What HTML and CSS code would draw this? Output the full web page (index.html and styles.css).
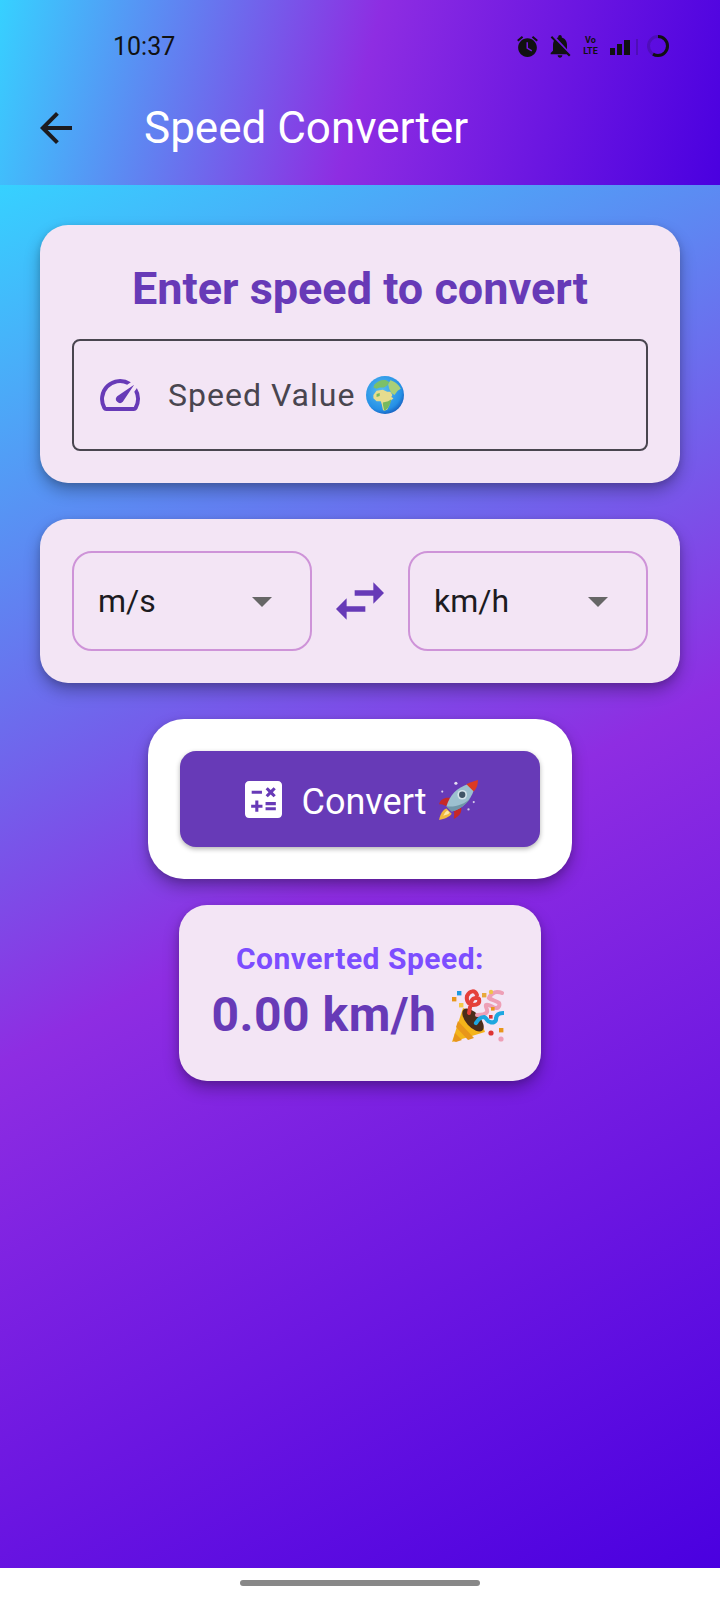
FILE: index.html
```html
<!DOCTYPE html>
<html lang="en">
<head>
    <meta charset="UTF-8">
    <meta name="viewport" content="width=device-width, initial-scale=1.0">
    <title>Speed Converter</title>
    <link rel="stylesheet" href="styles.css">
</head>
<body>
    <div class="app">
        <header class="appbar">
            <div class="statusbar">
                <span class="clock">10:37</span>
                <div class="status-icons">
                    <svg class="st-alarm" viewBox="0 0 24 24"><path d="M22 5.72l-4.6-3.86-1.29 1.53 4.6 3.86L22 5.72zM7.88 3.39L6.6 1.86 2 5.71l1.29 1.53 4.59-3.85z"/><path fill-rule="evenodd" d="M12 4c-4.97 0-9 4.03-9 9s4.02 9 9 9c4.97 0 9-4.03 9-9s-4.03-9-9-9zm.5 4H11v6l4.75 2.85.75-1.23-4-2.37V8z"/></svg>
                    <svg class="st-bell" viewBox="0 0 24 24"><path d="M20 18.69L7.84 6.14 5.27 3.49 4 4.76l2.8 2.8v.01c-.52.99-.8 2.16-.8 3.42v5l-2 2v1h13.73l2 2L21 19.72l-1-1.03zM12 22c1.11 0 2-.89 2-2h-4c0 1.11.89 2 2 2zm6-7.32V11c0-3.08-1.64-5.64-4.5-6.32V4c0-.83-.67-1.5-1.5-1.5s-1.5.67-1.5 1.5v.68c-.15.03-.29.08-.42.12-.1.03-.2.07-.3.11h-.01c-.2.08-.4.17-.59.27-.01 0-.01 0-.02.01L18 14.68z"/></svg>
                    <span class="st-volte">Vo<br>LTE</span>
                    <svg class="st-signal" viewBox="0 0 28 22"><rect x="0" y="13" width="5" height="7"/><rect x="7" y="9" width="5" height="11"/><rect x="14" y="5" width="6" height="15"/><rect x="26" y="4" width="2" height="16" opacity=".2"/></svg>
                    <svg class="st-ring" viewBox="0 0 24 24"><circle cx="12" cy="12" r="9.5" fill="none" stroke="#111" stroke-opacity=".18" stroke-width="3"/><path d="M12 2.5a9.5 9.5 0 0 1 0 19 9.5 9.5 0 0 1-5-1.4" fill="none" stroke="#111" stroke-width="3"/></svg>
                </div>
            </div>
            <div class="toolbar">
                <svg class="back-icon" viewBox="0 0 24 24"><path d="M20 11H7.83l5.59-5.59L12 4l-8 8 8 8 1.41-1.41L7.83 13H20v-2z"/></svg>
                <h1 class="title">Speed Converter</h1>
            </div>
        </header>

        <main class="content">
            <section class="card input-card">
                <h2 class="card-heading">Enter speed to convert</h2>
                <div class="field">
                    <svg class="field-icon" viewBox="0 0 24 24"><path d="M20.38 8.57l-1.23 1.85a8 8 0 0 1-.22 7.58H5.07A8 8 0 0 1 15.58 6.85l1.85-1.23A10 10 0 0 0 3.35 19a2 2 0 0 0 1.72 1h13.85a2 2 0 0 0 1.74-1 10 10 0 0 0-.27-10.44zm-9.79 6.84a2 2 0 0 0 2.83 0l5.66-8.49-8.49 5.66a2 2 0 0 0 0 2.83z"/></svg>
                    <span class="field-label">Speed Value</span>
                    <svg class="emoji globe" viewBox="0 0 36 36">
                        <defs><radialGradient id="sea" cx=".42" cy=".38" r=".68"><stop offset="0" stop-color="#58bdf0"/><stop offset=".75" stop-color="#2590e6"/><stop offset="1" stop-color="#1456b8"/></radialGradient></defs>
                        <circle cx="18" cy="18" r="18" fill="url(#sea)"/>
                        <path d="M8 8c3-3 7-5 11-4l3 2-2 3-3 2-4 0-3 1-3-1z" fill="#7cc068"/>
                        <path d="M23 4c4 1 8 4 10 8l-3 2-3 4-3-2-2-4-1-4z" fill="#a9cf78"/>
                        <path d="M7 18l3-4 6-1 4 2 3 0 2 3-1 2 2 1-3 3-1 4-2 4-3 1-1-1-1-5-1-3-4 0-3-3z" fill="#e6dc8e"/>
                        <path d="M16 25l5-1 3-2-1 4-2 4-3 3-1-1-1-5zM10 17l3-1 0 3-3 1z" fill="#76b95e"/>
                    </svg>
                </div>
            </section>

            <section class="card units-card">
                <div class="dropdown">
                    <span class="unit">m/s</span>
                    <svg class="caret" viewBox="0 0 24 24"><path d="M7 10l5 5 5-5z"/></svg>
                </div>
                <svg class="swap-icon" viewBox="0 0 24 24"><path d="M6.99 11L3 15l3.99 4v-3H14v-2H6.99v-3zM21 9l-4-4v3h-7v2h7v3l4-4z"/></svg>
                <div class="dropdown">
                    <span class="unit">km/h</span>
                    <svg class="caret" viewBox="0 0 24 24"><path d="M7 10l5 5 5-5z"/></svg>
                </div>
            </section>

            <section class="convert-box">
                <button class="convert-btn">
                    <svg class="calc-icon" viewBox="3 3 18 18"><path d="M19 3H5c-1.1 0-2 .9-2 2v14c0 1.1.9 2 2 2h14c1.1 0 2-.9 2-2V5c0-1.1-.9-2-2-2zm-5.97 4.06L14.09 6l1.41 1.41L16.91 6l1.06 1.06-1.41 1.41 1.41 1.41-1.06 1.06-1.41-1.4-1.41 1.41-1.06-1.06 1.41-1.41-1.41-1.42zm-6.78.66h5v1.5h-5v-1.5zM11.5 16h-2v2H8v-2H6v-1.5h2v-2h1.5v2h2V16zm6.5 1.25h-5v-1.5h5v1.5zm0-2.5h-5v-1.5h5v1.5z"/></svg>
                    <span class="btn-text">Convert</span>
                    <svg class="emoji rocket" viewBox="0 0 40 40">
                        <path d="M2 39c1-6 4-10 7-11l5 5c-2 3-7 5-12 6z" fill="#f0b83e"/>
                        <path d="M6 35c1-2 2-4 4-5l2 2c-1 2-3 2-6 3z" fill="#fbe7a8"/>
                        <path d="M2 24c1-5 6-7 11-6l-4 8c-3-2-5-2-7-2z" fill="#c62828"/>
                        <path d="M16 38c0-3 1-5 0-7l7-4c1 5-2 9-7 11z" fill="#c62828"/>
                        <path d="M9 26c3-11 11-18 20-21l6 6c-3 9-10 17-21 20z" fill="#9cc0cf"/>
                        <path d="M9 26l5 5c8-2 14-7 18-13-6 6-14 9-23 8z" fill="#6f95a8"/>
                        <path d="M28 5c4-2 8-3 11-4 0 4-1 8-4 11z" fill="#dc3a22"/>
                        <circle cx="24" cy="15" r="4.6" fill="#d3e3ea"/><circle cx="24" cy="15" r="3" fill="#3f5566"/>
                        <circle cx="18" cy="4" r="1.5" fill="#e6dff2"/><circle cx="5" cy="12" r="1" fill="#d6cdea"/><circle cx="35" cy="22" r="1" fill="#d6cdea"/><circle cx="30" cy="29" r="1.1" fill="#d6cdea"/>
                    </svg>
                </button>
            </section>

            <section class="card result-card">
                <div class="result-label">Converted Speed:</div>
                <div class="result-value">
                    <span>0.00 km/h</span>
                    <svg class="emoji popper" viewBox="0 0 52 54">
                        <path d="M0 54L11 20c8 2 19 13 22 24z" fill="#f4b41a"/>
                        <path d="M3 45l7 7-6 2-3-1zM6 33l16 17-6 2L4 39z" fill="#e8961a"/>
                        <ellipse cx="21" cy="32" rx="7" ry="14" transform="rotate(-42 21 32)" fill="#4a2c1a"/>
                        <path d="M25 7C23 2 18 2 15 8c-1 5 2 9 6 9 5 0 7-2 6-6-1-2-6-1-7 1-2 4-2 9-3 13" fill="none" stroke="#e5403a" stroke-width="4" stroke-linecap="round"/>
                        <path d="M25 27c4 0 9-1 10-3 1-3-2-5-1-7 2-2 7 3 10 3 3 0 4-3 3-5-2-2-8-3-10-5 1-3 5-6 8-6 3 0 5 1 5 1" fill="none" stroke="#ee9fb6" stroke-width="4" stroke-linecap="round"/>
                        <path d="M24 35c3-5 6-6 8-6 3 1 3 5 6 5 3 1 6 0 6-3 0-4 3-6 7-6" fill="none" stroke="#1da7e0" stroke-width="4.2" stroke-linecap="round"/>
                        <rect x="5" y="3" width="4.4" height="4.4" fill="#1d9be0"/><rect x="0" y="9" width="4.4" height="4.4" fill="#e8961a"/><rect x="7" y="15" width="4.4" height="4.4" fill="#f6c945"/><rect x="30" y="5" width="4.4" height="4.4" fill="#e8a93a"/><circle cx="39" cy="4" r="2.2" fill="#f0c24a"/>
                        <rect x="39" y="19" width="3.6" height="3.6" fill="#e8961a"/><rect x="37" y="27" width="3.6" height="3.6" fill="#d33"/><circle cx="39" cy="45" r="2.6" fill="#d33"/><rect x="47" y="40" width="4.4" height="4.4" fill="#e8961a"/><circle cx="49" cy="51" r="2.6" fill="#ee9fb6"/>
                    </svg>
                </div>
            </section>
        </main>

        <footer class="navbar"><div class="nav-pill"></div></footer>
    </div>
</body>
</html>
```

FILE: styles.css
```css
:root {
    --primary: #673ab7;
    --card-bg: #f3e5f5;
    --shadow: 0 8px 16px rgba(0, 0, 0, 0.28), 0 2px 6px rgba(0, 0, 0, 0.12);
}

* {
    margin: 0;
    padding: 0;
    box-sizing: border-box;
}

body {
    font-family: 'Roboto', sans-serif;
    background-color: #fff;
    overflow: hidden;
}

.app {
    display: flex;
    flex-direction: column;
    width: 720px;
    height: 1600px;
}

.appbar {
    height: 185px;
    flex: none;
    background: linear-gradient(104.4deg, #36d1ff 0%, #8e2de2 50%, #4a00e0 100%);
}

.statusbar {
    height: 92px;
    display: flex;
    align-items: center;
    justify-content: space-between;
    padding: 0 50px 0 113px;
    color: #111;
}

.clock {
    font-size: 25px;
}

.status-icons {
    display: flex;
    align-items: center;
}

.status-icons svg {
    display: block;
    fill: #111;
}

.st-alarm { width: 25px; height: 25px; }
.st-bell { width: 28px; height: 28px; margin-left: 6px; }

.st-volte {
    width: 15px;
    margin-left: 9px;
    font-size: 9px;
    line-height: 11px;
    font-weight: 700;
    text-align: center;
    white-space: nowrap;
}

.st-signal { width: 28px; height: 22px; margin-left: 12px; }
.st-ring { width: 24px; height: 24px; margin-left: 8px; }

.toolbar {
    display: flex;
    align-items: center;
    height: 72px;
    padding-left: 32px;
}

.back-icon {
    width: 48px;
    height: 48px;
    fill: #1c1b1f;
    flex: none;
}

.title {
    margin-left: 64px;
    font-size: 44px;
    font-weight: 400;
    color: #fff;
}

.content {
    flex: 1;
    display: flex;
    flex-direction: column;
    align-items: center;
    padding: 40px 40px 0;
    background: linear-gradient(152.5deg, #36d1ff 0%, #8e2de2 50%, #4a00e0 100%);
}

.card {
    background-color: var(--card-bg);
    border-radius: 28px;
    box-shadow: var(--shadow);
}

.input-card {
    width: 640px;
    height: 258px;
    padding: 38px 32px 0;
}

.card-heading {
    font-size: 45px;
    line-height: 52px;
    font-weight: 700;
    text-align: center;
    color: var(--primary);
}

.field {
    display: flex;
    align-items: center;
    height: 112px;
    margin-top: 24px;
    padding-left: 22px;
    border: 2px solid #49454f;
    border-radius: 8px;
}

.field-icon {
    width: 48px;
    height: 48px;
    fill: var(--primary);
    flex: none;
}

.field-label {
    margin-left: 24px;
    font-size: 32px;
    letter-spacing: 1px;
    color: #49454f;
}

.emoji {
    display: block;
    flex: none;
}

.globe {
    width: 38px;
    height: 38px;
    margin-left: 11px;
}

.units-card {
    display: flex;
    align-items: center;
    justify-content: space-between;
    width: 640px;
    height: 164px;
    margin-top: 36px;
    padding: 0 32px;
}

.dropdown {
    display: flex;
    align-items: center;
    justify-content: space-between;
    width: 240px;
    height: 100px;
    padding: 0 24px;
    border: 2px solid #ce93d8;
    border-radius: 20px;
}

.unit {
    font-size: 32px;
    font-weight: 450;
    color: #1c1b1f;
}

.caret {
    width: 48px;
    height: 48px;
    fill: #666;
}

.swap-icon {
    width: 64px;
    height: 64px;
    fill: var(--primary);
}

.convert-box {
    display: flex;
    align-items: center;
    justify-content: center;
    width: 424px;
    height: 160px;
    margin-top: 36px;
    background-color: #fff;
    border-radius: 36px;
    box-shadow: var(--shadow);
}

.convert-btn {
    display: flex;
    align-items: center;
    justify-content: center;
    width: 360px;
    height: 96px;
    padding-left: 3px;
    border: none;
    border-radius: 16px;
    background-color: var(--primary);
    box-shadow: 0 2px 5px rgba(0, 0, 0, 0.3);
    color: #fff;
    font-family: inherit;
    font-size: 36px;
}

.calc-icon {
    width: 37px;
    height: 37px;
    fill: #fff;
    margin-right: 20px;
}

.btn-text {
    padding-top: 5px;
}

.rocket {
    width: 42px;
    height: 42px;
    margin-left: 10px;
    margin-top: 2px;
}

.result-card {
    display: flex;
    flex-direction: column;
    align-items: center;
    width: 362px;
    height: 176px;
    margin-top: 26px;
    padding-top: 36px;
}

.result-label {
    font-size: 30px;
    line-height: 36px;
    font-weight: 700;
    letter-spacing: 0.5px;
    color: #7c4dff;
}

.result-value {
    display: flex;
    align-items: center;
    margin-top: 8px;
    padding-right: 4px;
    font-size: 48px;
    line-height: 60px;
    font-weight: 700;
    letter-spacing: 0.5px;
    color: var(--primary);
}

.popper {
    width: 52px;
    height: 54px;
    margin-left: 16px;
}

.navbar {
    height: 32px;
    flex: none;
    display: flex;
    justify-content: center;
    padding-top: 12px;
    background-color: #fff;
}

.nav-pill {
    width: 240px;
    height: 6px;
    border-radius: 3px;
    background-color: #888;
}
```
